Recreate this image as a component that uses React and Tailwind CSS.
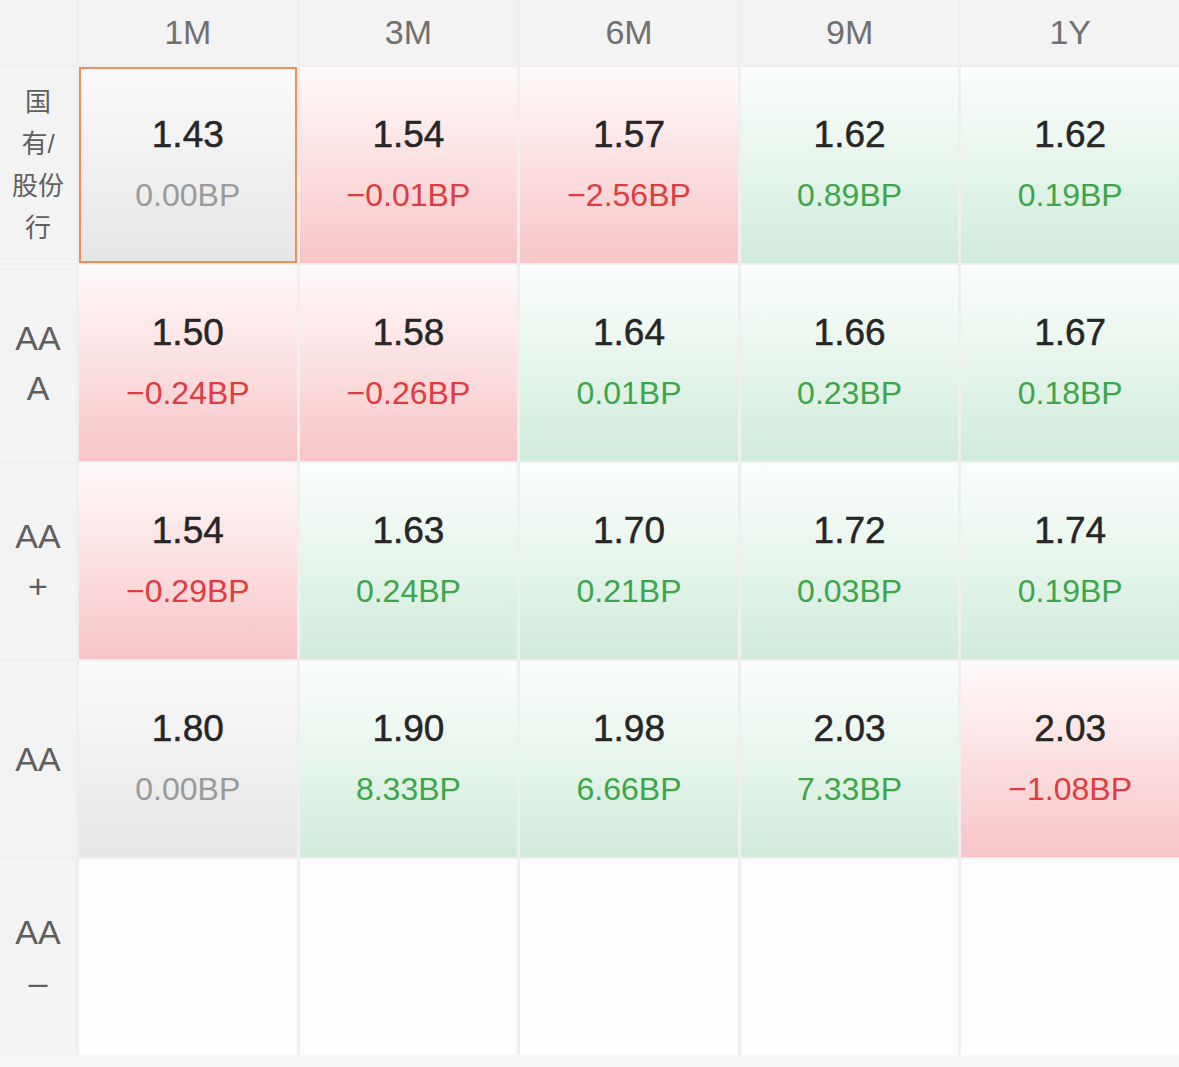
import React from "react";

const tenors = ["1M", "3M", "6M", "9M", "1Y"];

const rows = [
  {
    label: ["国", "有/", "股份", "行"],
    cjk: true,
    cells: [
      ["1.43", "0.00BP", "flat"],
      ["1.54", "−0.01BP", "down"],
      ["1.57", "−2.56BP", "down"],
      ["1.62", "0.89BP", "up"],
      ["1.62", "0.19BP", "up"]
    ]
  },
  {
    label: ["AA", "A"],
    cells: [
      ["1.50", "−0.24BP", "down"],
      ["1.58", "−0.26BP", "down"],
      ["1.64", "0.01BP", "up"],
      ["1.66", "0.23BP", "up"],
      ["1.67", "0.18BP", "up"]
    ]
  },
  {
    label: ["AA", "+"],
    cells: [
      ["1.54", "−0.29BP", "down"],
      ["1.63", "0.24BP", "up"],
      ["1.70", "0.21BP", "up"],
      ["1.72", "0.03BP", "up"],
      ["1.74", "0.19BP", "up"]
    ]
  },
  {
    label: ["AA"],
    cells: [
      ["1.80", "0.00BP", "flat"],
      ["1.90", "8.33BP", "up"],
      ["1.98", "6.66BP", "up"],
      ["2.03", "7.33BP", "up"],
      ["2.03", "−1.08BP", "down"]
    ]
  },
  {
    label: ["AA", "–"],
    cells: [null, null, null, null, null]
  }
];

// 涨跌配色：绿涨 / 红跌 / 灰持平
const tone = {
  up: { bg: "bg-gradient-to-b from-[#fbfefc] to-[#d1ebdb]", text: "text-[#3ca64a]" },
  down: { bg: "bg-gradient-to-b from-[#fefafa] to-[#f7c5c7]", text: "text-[#e03b3f]" },
  flat: { bg: "bg-gradient-to-b from-[#fafafa] to-[#e6e6e6]", text: "text-[#9a9a9a]" }
};

function Cell({ cell, selected }) {
  if (!cell) return <div className="bg-[#fdfdfd] h-[196px]" />;
  const [rate, change, dir] = cell;
  const t = tone[dir];
  return (
    <div
      className={`h-[196px] flex flex-col items-center justify-center ${t.bg} ${
        selected ? "border-2 border-[#ef8e55]" : ""
      }`}
    >
      <div className="text-[37px] leading-[48px] text-[#262626] [-webkit-text-stroke:0.5px_#262626]">
        {rate}
      </div>
      <div className={`mt-[12px] text-[32px] leading-[48px] ${t.text}`}>{change}</div>
    </div>
  );
}

export default function App() {
  return (
    <div className="w-[1179px] h-[1067px] bg-[#f5f6f8] overflow-hidden font-['Liberation_Sans','Noto_Sans_CJK_SC',sans-serif]">
      <div className="grid grid-cols-[76px_repeat(5,1fr)] gap-x-[3px] gap-y-[2px] bg-[#efefef]">
        <div className="bg-[#f3f3f3] h-[65px]" />
        {tenors.map(t => (
          <div
            key={t}
            className="bg-[#f3f3f3] h-[65px] flex items-center justify-center text-[34px] text-[#707070]"
          >
            {t}
          </div>
        ))}

        {rows.map((row, ri) => (
          <React.Fragment key={ri}>
            <div className="bg-[#f3f3f3] h-[196px] flex flex-col items-center justify-center text-[#5f5f5f]">
              {row.label.map((l, i) => (
                <div
                  key={i}
                  className={row.cjk ? "text-[26px] leading-[42px]" : "text-[34px] leading-[50px]"}
                >
                  {l}
                </div>
              ))}
            </div>
            {row.cells.map((c, ci) => (
              <Cell key={ci} cell={c} selected={ri === 0 && ci === 0} />
            ))}
          </React.Fragment>
        ))}
      </div>
    </div>
  );
}
